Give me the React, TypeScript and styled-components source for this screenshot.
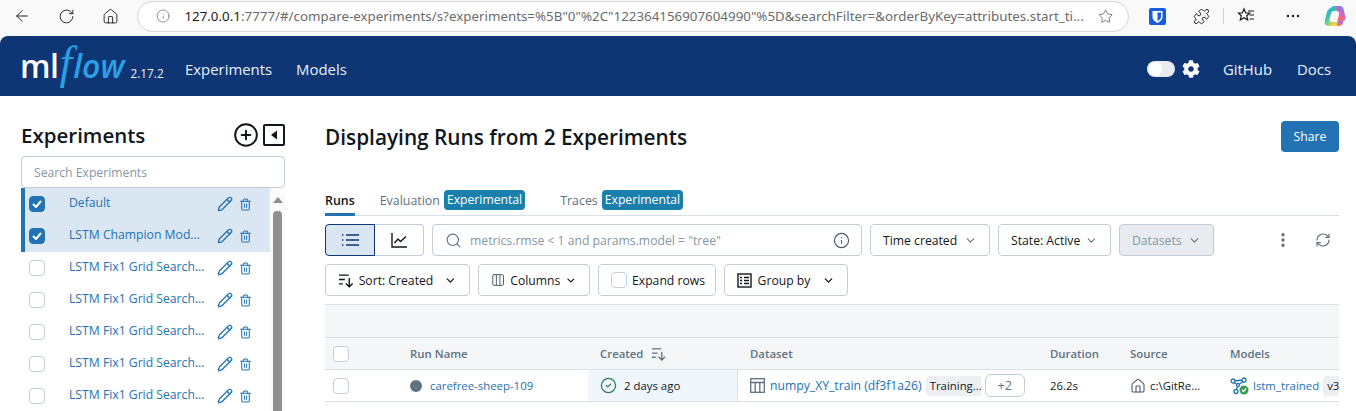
import React from "react";
import styled, { createGlobalStyle } from "styled-components";
import {
  ArrowLeft,
  ChevronDown,
  CircleCheck,
  CirclePlus,
  Columns3,
  EllipsisVertical,
  Home,
  Info,
  Pencil,
  Puzzle,
  RefreshCw,
  RotateCw,
  Search,
  Star,
  Trash2,
} from "lucide-react";
import { FaCog } from "react-icons/fa";

const GlobalStyle = createGlobalStyle`
  html, body {
    margin: 0;
    height: 411px;
    overflow: hidden;
    background: #f9f9f9;
    font-family: "Open Sans", "Noto Sans", sans-serif;
  }
  * { box-sizing: border-box; }
`;

const BrowserBar = styled.div`
  height: 36px;
  display: flex;
  align-items: center;
  background: #f9f9f9;
  padding-bottom: 4px;
  color: #1b1b1b;
`;

const BrowserButton = styled.div<{ $w?: number }>`
  width: ${(p) => p.$w ?? 44}px;
  display: flex;
  justify-content: center;
  align-items: center;
  flex: none;
`;

const AddressBar = styled.div`
  width: 992px;
  height: 31px;
  margin: 0 6px 0 5px;
  flex: none;
  background: #fff;
  border: 1px solid #d4d4d4;
  border-radius: 16px;
  display: flex;
  align-items: center;
  padding: 0 15px 0 18px;
  gap: 14px;
  font-family: "Noto Sans", sans-serif;
  font-size: 13.35px;
  color: #6b6b6b;
`;

const Url = styled.div`
  flex: 1;
  white-space: nowrap;
  b {
    font-weight: 400;
    color: #1b1b1b;
  }
`;

const Separator = styled.div`
  width: 1px;
  height: 16px;
  background: #d0d0d0;
  flex: none;
`;

const Navbar = styled.header`
  height: 60px;
  background: #0e3574;
  border-radius: 8px 8px 0 0;
  display: flex;
  align-items: center;
  color: #e8f1fb;
  font-size: 14.9px;
  padding: 6px 25px 0 20px;
`;

const Logo = styled.div`
  display: flex;
  align-items: baseline;
  width: 165px;
  height: 50px;
  flex: none;
  color: #fff;
  font-size: 32px;
  font-weight: 600;
  letter-spacing: -0.5px;
  line-height: 44px;
`;

const LogoFlow = styled.span`
  color: #2aa0e6;
  font-style: italic;
  font-weight: 600;
  letter-spacing: 0;
  margin-left: 1px;
`;

const LogoF = styled.span`
  font-family: "Liberation Serif", serif;
  font-size: 46px;
  font-weight: 400;
  line-height: 0;
  margin-right: 1px;
`;

const Version = styled.span`
  font-size: 11.8px;
  font-weight: 400;
  letter-spacing: 0;
  color: #e8f1fb;
  margin-left: 6px;
`;

const NavLink = styled.span<{ $gap: number }>`
  margin-right: ${(p) => p.$gap}px;
  white-space: nowrap;
`;

const NavSpacer = styled.div`
  flex: 1;
`;

const Toggle = styled.div`
  width: 28px;
  height: 16px;
  border-radius: 8px;
  background: #e8ebef;
  display: flex;
  align-items: center;
  margin-right: 7px;
  &::before {
    content: "";
    width: 14px;
    height: 14px;
    margin-left: 1px;
    border-radius: 50%;
    background: #fff;
  }
`;

const Body = styled.div`
  display: flex;
  background: #fff;
  height: 315px;
  overflow: hidden;
`;

const Sidebar = styled.aside`
  width: 325px;
  flex: none;
  padding: 25px 0 0 21px;
`;

const SideHeader = styled.div`
  width: 264px;
  height: 35px;
  padding-bottom: 7px;
  display: flex;
  align-items: center;
  color: #11171c;
`;

const SideTitle = styled.h2`
  flex: 1;
  margin: 0;
  font-size: 20.5px;
  font-weight: 600;
`;

const SideSearch = styled.div`
  width: 264px;
  height: 32px;
  border: 1px solid #c0cdd8;
  border-radius: 4px;
  padding: 0 12px;
  display: flex;
  align-items: center;
  font-size: 12.2px;
  color: #8396a5;
`;

const SideColumns = styled.div`
  display: flex;
  width: 264px;
`;

const ExperimentList = styled.div`
  width: 249px;
  flex: none;
`;

const ExperimentRow = styled.div<{ $active?: boolean }>`
  height: 32px;
  display: flex;
  align-items: center;
  padding-left: ${(p) => (p.$active ? 4 : 8)}px;
  background: ${(p) => (p.$active ? "#dae6f2" : "transparent")};
  border-left: ${(p) => (p.$active ? "4px solid #2272b4" : "none")};
  font-size: 12.2px;
  color: #2272b4;
`;

const CheckBox = styled.div<{ $checked?: boolean }>`
  width: 16px;
  height: 16px;
  flex: none;
  border-radius: 4px;
  border: 1px solid ${(p) => (p.$checked ? "#2272b4" : "#c0cfde")};
  background: ${(p) => (p.$checked ? "#2272b4" : "#fff")};
  display: flex;
  align-items: center;
  justify-content: center;
  svg {
    display: block;
  }
`;

const ExperimentName = styled.span`
  width: 148px;
  margin-left: 24px;
  padding-bottom: 4px;
  white-space: nowrap;
  overflow: hidden;
  flex: none;
`;

const RowIcons = styled.div`
  display: flex;
  align-items: center;
  gap: 6px;
  svg {
    display: block;
  }
`;

const ScrollTrack = styled.div`
  width: 15px;
  height: 260px;
  background: #fafafa;
  display: flex;
  flex-direction: column;
  align-items: center;
  flex: none;
`;

const ScrollArrow = styled.div`
  width: 0;
  height: 0;
  margin: 9px 0 8px;
  border-left: 5px solid transparent;
  border-right: 5px solid transparent;
  border-bottom: 6px solid #8f8f8f;
`;

const ScrollThumb = styled.div`
  width: 9px;
  flex: 1;
  border-radius: 4px 4px 0 0;
  background: #8f8f8f;
`;

const Main = styled.main`
  width: 1014px;
  flex: none;
  padding-top: 25px;
`;

const TitleRow = styled.div`
  height: 31px;
  display: flex;
  align-items: center;
  justify-content: space-between;
`;

const PageTitle = styled.h1`
  margin: 0;
  font-size: 20.8px;
  font-weight: 600;
  color: #11171c;
`;

const ShareButton = styled.button`
  width: 58px;
  height: 31px;
  border: 0;
  border-radius: 4px;
  background: #2272b4;
  color: #fff;
  font: inherit;
  font-size: 12.2px;
  padding: 0;
`;

const Tabs = styled.div`
  height: 36px;
  margin-top: 28px;
  display: flex;
  align-items: flex-start;
  border-bottom: 1px solid #d8e0e8;
  font-size: 12.4px;
  color: #5f7281;
`;

const Tab = styled.div<{ $active?: boolean; $gap?: number }>`
  height: 36px;
  display: flex;
  align-items: center;
  gap: 4px;
  padding-top: 4px;
  margin-right: ${(p) => p.$gap ?? 0}px;
  ${(p) =>
    p.$active
      ? "color:#11171c;font-weight:600;border-bottom:3px solid #2272b4;padding-top:7px;"
      : ""}
`;

const ExperimentalTag = styled.span`
  background: #1a7fab;
  color: #fff;
  height: 20px;
  line-height: 20px;
  border-radius: 4px;
  padding: 0 3px;
  font-size: 12.2px;
`;

const ToolRow = styled.div`
  display: flex;
  align-items: center;
  margin-top: 8px;
  height: 32px;
`;

const Segment = styled.div`
  display: flex;
  flex: none;
  margin-right: 8px;
`;

const SegmentButton = styled.div<{ $active?: boolean }>`
  height: 32px;
  width: ${(p) => (p.$active ? 50 : 49)}px;
  display: flex;
  align-items: center;
  justify-content: center;
  color: #11171c;
  background: ${(p) => (p.$active ? "#dae6f2" : "#fff")};
  border: 1px solid ${(p) => (p.$active ? "#0e3574" : "#c0cdd8")};
  border-left-width: ${(p) => (p.$active ? 1 : 0)}px;
  border-radius: ${(p) => (p.$active ? "4px 0 0 4px" : "0 4px 4px 0")};
`;

const SearchBox = styled.div`
  width: 430px;
  height: 32px;
  flex: none;
  border: 1px solid #c0cdd8;
  border-radius: 4px;
  display: flex;
  align-items: center;
  padding: 0 11px 0 12px;
  gap: 8px;
  font-size: 12.2px;
  color: #8396a5;
  margin-right: 8px;
  span {
    flex: 1;
    white-space: nowrap;
  }
`;

const ToolButton = styled.div<{ $w: number; $gap?: number; $disabled?: boolean; $between?: boolean }>`
  width: ${(p) => p.$w}px;
  height: 32px;
  flex: none;
  display: flex;
  align-items: center;
  justify-content: ${(p) => (p.$between ? "space-between" : "flex-start")};
  gap: 5px;
  padding: 0 12px;
  margin-right: ${(p) => p.$gap ?? 8}px;
  font-size: 12.2px;
  white-space: nowrap;
  color: ${(p) => (p.$disabled ? "#8396a5" : "#11171c")};
  background: ${(p) => (p.$disabled ? "#e8ecf0" : "#fff")};
  border: 1px solid #c0cdd8;
  border-radius: 4px;
`;

const IconAction = styled.div<{ $w: number }>`
  width: ${(p) => p.$w}px;
  display: flex;
  justify-content: center;
  color: #5f7281;
  flex: none;
`;

const Table = styled.div`
  margin-top: 8px;
  border-top: 1px solid #d8e0e8;
`;

const GroupBand = styled.div`
  height: 33px;
  background: #f5f6f8;
  border-bottom: 1px solid #d8e0e8;
`;

const TableRow = styled.div<{ $head?: boolean }>`
  height: 32px;
  display: grid;
  grid-template-columns: 75px 188px 150px 300px 80px 100px 121px;
  border-bottom: 1px solid #d8e0e8;
  background: ${(p) => (p.$head ? "#f5f6f8" : "#fff")};
  color: ${(p) => (p.$head ? "#5f7281" : "#11171c")};
  font-size: 11.4px;
  font-weight: ${(p) => (p.$head ? 600 : 400)};
`;

const Cell = styled.div<{ $pad?: number; $tint?: boolean; $divider?: boolean }>`
  display: flex;
  align-items: center;
  min-width: 0;
  overflow: hidden;
  white-space: nowrap;
  padding-left: ${(p) => p.$pad ?? 12}px;
  background: ${(p) => (p.$tint ? "#eff6fc" : "transparent")};
  border-right: ${(p) => (p.$divider ? "1px solid #d8e0e8" : "none")};
`;

const RunDot = styled.span`
  width: 12px;
  height: 12px;
  border-radius: 50%;
  background: #5f7281;
  margin-right: 8px;
  flex: none;
`;

const RowLink = styled.span<{ $size?: number }>`
  color: #2272b4;
  flex: none;
  font-size: ${(p) => p.$size ?? 11.4}px;
`;

const GrayTag = styled.span<{ $w: number }>`
  background: #edf0f3;
  height: 20px;
  line-height: 20px;
  padding-left: 4px;
  margin-left: 4px;
  border-radius: 4px 0 0 4px;
  flex: none;
  overflow: hidden;
  width: ${(p) => p.$w}px;
`;

const MoreChip = styled.span`
  width: 40px;
  height: 23px;
  margin-left: 4px;
  border: 1px solid #c0cdd8;
  border-radius: 6px;
  display: flex;
  align-items: center;
  justify-content: center;
  color: #5f7281;
  font-size: 12.5px;
  flex: none;
  background: #fff;
`;

const SortGlyph = styled.span`
  margin-left: 8px;
  display: flex;
`;

const SortLines = ({ size = 16 }: { size?: number }) => (
  <svg width={size} height={size} viewBox="0 0 16 16" fill="none" stroke="currentColor" strokeWidth="1.4">
    <path d="M1 3h10M1 7.5h6M1 12h4M11.5 6v9M8 11.5l3.500 3.500 3.500-3.500" />
  </svg>
);

const CollapseIcon = () => (
  <svg width="22" height="22" viewBox="0 0 22 22" fill="none">
    <rect x="1" y="1" width="20" height="20" rx="1" stroke="#11171c" strokeWidth="2" />
    <path d="M14 6.500v9L8 11z" fill="#11171c" />
  </svg>
);

const ListIcon = () => (
  <svg width="17" height="14" viewBox="0 0 17 14" fill="none" stroke="#0e3574" strokeWidth="1.5">
    <path d="M4 2h13M4 7h13M4 12h13" />
    <path d="M0 2h2M0 7h2M0 12h2" strokeDasharray="1 .6" />
  </svg>
);

const ChartIcon = () => (
  <svg width="16" height="15" viewBox="0 0 16 15" fill="none" stroke="#11171c" strokeWidth="1.4">
    <path d="M1 0v14h15M3.500 10l3.500-4 2.500 2.500L15 3.500" />
  </svg>
);

const TableIcon = () => (
  <svg width="15" height="15" viewBox="0 0 15 15" fill="none" stroke="#5f7281" strokeWidth="1.3" style={{ marginRight: 5, flex: "none" }}>
    <rect x=".7" y=".7" width="13.600" height="13.600" />
    <path d="M.7 4.500h13.600M5.200 4.500v9.800M9.800 4.500v9.800" />
  </svg>
);

const GroupIcon = () => (
  <svg width="15" height="15" viewBox="0 0 15 15" fill="none" stroke="#11171c" strokeWidth="1.4">
    <rect x="1" y="1" width="13" height="13" />
    <path d="M3 4.500h2M7 4.500h5M3 7.500h2M7 7.500h5M3 10.500h2M7 10.500h5" />
  </svg>
);

const ModelIcon = () => (
  <svg width="19" height="18" viewBox="0 0 19 18" fill="none" style={{ marginRight: 4, flex: "none" }}>
    <g stroke="#2272b4" strokeWidth="1.3">
      <circle cx="3" cy="4" r="2" />
      <circle cx="14" cy="3" r="2" />
      <circle cx="6" cy="14.500" r="2" />
      <circle cx="8" cy="8" r="1.500" />
      <path d="M5 4l7-1M4 6l3 1M9.500 7l3.500-2.500M7.500 9.500l-1 3" />
    </g>
    <circle cx="14" cy="13" r="4.500" fill="#3a9b55" />
    <path d="M12 13l1.500 1.500 2.500-3" stroke="#fff" strokeWidth="1.2" />
  </svg>
);

const BitwardenIcon = () => (
  <svg width="17" height="17" viewBox="0 0 17 17">
    <rect width="17" height="17" rx="2" fill="#175ddc" />
    <path d="M3.500 3h10v6c0 3-2.500 4.500-5 6-2.500-1.500-5-3-5-6z" fill="#fff" />
    <path d="M8.500 4.500h3.500v4.500c0 1.800-1.500 3-3.500 4.200z" fill="#175ddc" />
  </svg>
);

const FavoritesIcon = () => (
  <svg width="18" height="18" viewBox="0 0 18 18" fill="none" stroke="#1b1b1b" strokeWidth="1.2">
    <path d="M7 2l1.700 4h4l-3 2.800 1 4.200L7 10.800 3.300 13l1-4.200-3-2.800h4z" />
    <path d="M11 4h6M12.500 8h4.500M12.500 12h4.500" />
  </svg>
);

const EllipsisHorizontal = () => (
  <svg width="14" height="4" viewBox="0 0 14 4" fill="#1b1b1b">
    <circle cx="2" cy="2" r="1.200" />
    <circle cx="7" cy="2" r="1.200" />
    <circle cx="12" cy="2" r="1.200" />
  </svg>
);

const CopilotIcon = () => (
  <svg width="22" height="22" viewBox="0 0 22 22" fill="none">
    <defs>
      <linearGradient id="cpA" x1="0" y1="0" x2="0.6" y2="1">
        <stop offset="0" stopColor="#2f9be8" />
        <stop offset="0.55" stopColor="#38c8a8" />
        <stop offset="1" stopColor="#f4d94a" />
      </linearGradient>
      <linearGradient id="cpB" x1="0.8" y1="0" x2="0.3" y2="1">
        <stop offset="0" stopColor="#6f86f2" />
        <stop offset="0.55" stopColor="#e55fb4" />
        <stop offset="1" stopColor="#f8793e" />
      </linearGradient>
    </defs>
    <path d="M11 1h5c2 0 3 1 3.400 2.600L21.500 12c.5 2.500-1 4-3 4h-5.200L15 9.500C15.600 7 14 6 12.500 6H10z" fill="url(#cpB)" />
    <path d="M8 2c.8-.8 2-1 3-1l2 5H10c-1.500 0-2.700 1-3 2.500L5.500 14c-.4 2 .8 3 2.500 3h6l-1 4H5c-3 0-4.800-2-4.200-5L3 7C3.600 4.800 6 3 8 2z" fill="url(#cpA)" />
    <path d="M13 21h1.500c2.500 0 4-1.500 4.600-3.500l.4-1.500h-6z" fill="url(#cpB)" />
  </svg>
);

const CheckMark = () => (
  <svg width="10" height="8" viewBox="0 0 10 8" fill="none" stroke="#fff" strokeWidth="2">
    <path d="M1 4l3 3 5-6" />
  </svg>
);

const experiments = [
  { name: "Default", checked: true },
  { name: "LSTM Champion Mod...", checked: true },
  { name: "LSTM Fix1 Grid Search...", checked: false },
  { name: "LSTM Fix1 Grid Search...", checked: false },
  { name: "LSTM Fix1 Grid Search...", checked: false },
  { name: "LSTM Fix1 Grid Search...", checked: false },
  { name: "LSTM Fix1 Grid Search...", checked: false },
];

const App: React.FC = () => {
  return (
    <>
      <GlobalStyle />
      <BrowserBar>
        <BrowserButton>
          <ArrowLeft size={18} strokeWidth={1.3} />
        </BrowserButton>
        <BrowserButton>
          <RotateCw size={17} strokeWidth={1.3} />
        </BrowserButton>
        <BrowserButton>
          <Home size={17} strokeWidth={1.3} />
        </BrowserButton>
        <AddressBar>
          <Info size={16} strokeWidth={1.2} color="#6b6b6b" />
          <Url>
            <b>127.0.0.1</b>:7777/#/compare-experiments/s?experiments=%5B"0"%2C"122364156907604990"%5D&amp;searchFilter=&amp;orderByKey=attributes.start_ti...
          </Url>
          <Star size={17} strokeWidth={1.2} color="#555" />
        </AddressBar>
        <BrowserButton $w={44}>
          <BitwardenIcon />
        </BrowserButton>
        <BrowserButton $w={44}>
          <Puzzle size={17} strokeWidth={1.3} />
        </BrowserButton>
        <Separator />
        <BrowserButton $w={44}>
          <FavoritesIcon />
        </BrowserButton>
        <BrowserButton $w={50}>
          <EllipsisHorizontal />
        </BrowserButton>
        <BrowserButton $w={34}>
          <CopilotIcon />
        </BrowserButton>
      </BrowserBar>
      <Navbar>
        <Logo>
          ml
          <LogoFlow>
            <LogoF>f</LogoF>low
          </LogoFlow>
          <Version>2.17.2</Version>
        </Logo>
        <NavLink $gap={24}>Experiments</NavLink>
        <NavLink $gap={0}>Models</NavLink>
        <NavSpacer />
        <Toggle />
        <FaCog size={18} color="#fff" style={{ marginRight: 23 }} />
        <NavLink $gap={25}>GitHub</NavLink>
        <NavLink $gap={0}>Docs</NavLink>
      </Navbar>
      <Body>
        <Sidebar>
          <SideHeader>
            <SideTitle>Experiments</SideTitle>
            <CirclePlus size={26} strokeWidth={1.8} style={{ marginRight: 4 }} />
            <CollapseIcon />
          </SideHeader>
          <SideSearch>Search Experiments</SideSearch>
          <SideColumns>
            <ExperimentList>
              {experiments.map((exp, i) => (
                <ExperimentRow key={i} $active={exp.checked}>
                  <CheckBox $checked={exp.checked}>{exp.checked && <CheckMark />}</CheckBox>
                  <ExperimentName>{exp.name}</ExperimentName>
                  <RowIcons>
                    <Pencil size={16} strokeWidth={2} />
                    <Trash2 size={13} strokeWidth={1.9} />
                  </RowIcons>
                </ExperimentRow>
              ))}
            </ExperimentList>
            <ScrollTrack>
              <ScrollArrow />
              <ScrollThumb />
            </ScrollTrack>
          </SideColumns>
        </Sidebar>
        <Main>
          <TitleRow>
            <PageTitle>Displaying Runs from 2 Experiments</PageTitle>
            <ShareButton>Share</ShareButton>
          </TitleRow>
          <Tabs>
            <Tab $active $gap={25}>Runs</Tab>
            <Tab $gap={35}>
              Evaluation <ExperimentalTag>Experimental</ExperimentalTag>
            </Tab>
            <Tab>
              Traces <ExperimentalTag>Experimental</ExperimentalTag>
            </Tab>
          </Tabs>
          <ToolRow>
            <Segment>
              <SegmentButton $active>
                <ListIcon />
              </SegmentButton>
              <SegmentButton>
                <ChartIcon />
              </SegmentButton>
            </Segment>
            <SearchBox>
              <Search size={17} strokeWidth={1.6} color="#5f7281" />
              <span>metrics.rmse &lt; 1 and params.model = "tree"</span>
              <Info size={17} strokeWidth={1.6} color="#4a5a66" />
            </SearchBox>
            <ToolButton $w={120} $between>
              Time created <ChevronDown size={13} color="#5f7281" />
            </ToolButton>
            <ToolButton $w={113} $between>
              State: Active <ChevronDown size={13} color="#5f7281" />
            </ToolButton>
            <ToolButton $w={95} $between $disabled $gap={54}>
              Datasets <ChevronDown size={13} color="#5f7281" />
            </ToolButton>
            <IconAction $w={30}>
              <EllipsisVertical size={18} strokeWidth={2.6} />
            </IconAction>
            <IconAction $w={50}>
              <RefreshCw size={16} strokeWidth={1.8} />
            </IconAction>
          </ToolRow>
          <ToolRow>
            <ToolButton $w={145} $between>
              <SortLines />
              <span>Sort: Created</span>
              <ChevronDown size={13} strokeWidth={2.4} style={{ marginLeft: 6 }} />
            </ToolButton>
            <ToolButton $w={112} $between>
              <Columns3 size={16} strokeWidth={1.6} color="#4a5a66" />
              <span>Columns</span>
              <ChevronDown size={13} strokeWidth={2.4} />
            </ToolButton>
            <ToolButton $w={118}>
              <CheckBox />
              Expand rows
            </ToolButton>
            <ToolButton $w={124} $between>
              <GroupIcon />
              <span>Group by</span>
              <ChevronDown size={13} strokeWidth={2.4} style={{ marginLeft: 6 }} />
            </ToolButton>
          </ToolRow>
          <Table>
            <GroupBand />
            <TableRow $head>
              <Cell $pad={8}>
                <CheckBox />
              </Cell>
              <Cell $pad={10}>Run Name</Cell>
              <Cell>
                Created
                <SortGlyph>
                  <SortLines size={15} />
                </SortGlyph>
              </Cell>
              <Cell>Dataset</Cell>
              <Cell>Duration</Cell>
              <Cell>Source</Cell>
              <Cell>Models</Cell>
            </TableRow>
            <TableRow>
              <Cell $pad={8}>
                <CheckBox />
              </Cell>
              <Cell $pad={10}>
                <RunDot />
                <RowLink>carefree-sheep-109</RowLink>
              </Cell>
              <Cell $tint $divider>
                <CircleCheck size={17} strokeWidth={1.8} color="#2f7d4f" style={{ marginRight: 7 }} />
                2 days ago
              </Cell>
              <Cell>
                <TableIcon />
                <RowLink $size={12.2}>numpy_XY_train (df3f1a26)</RowLink>
                <GrayTag $w={55}>Training...</GrayTag>
                <MoreChip>+2</MoreChip>
              </Cell>
              <Cell>26.2s</Cell>
              <Cell>
                <Home size={16} strokeWidth={1.6} color="#4a5a66" style={{ marginRight: 4 }} />
                c:\GitRe...
              </Cell>
              <Cell>
                <ModelIcon />
                <RowLink>lstm_trained</RowLink>
                <GrayTag $w={22}>v3</GrayTag>
              </Cell>
            </TableRow>
          </Table>
        </Main>
      </Body>
    </>
  );
};

export default App;
